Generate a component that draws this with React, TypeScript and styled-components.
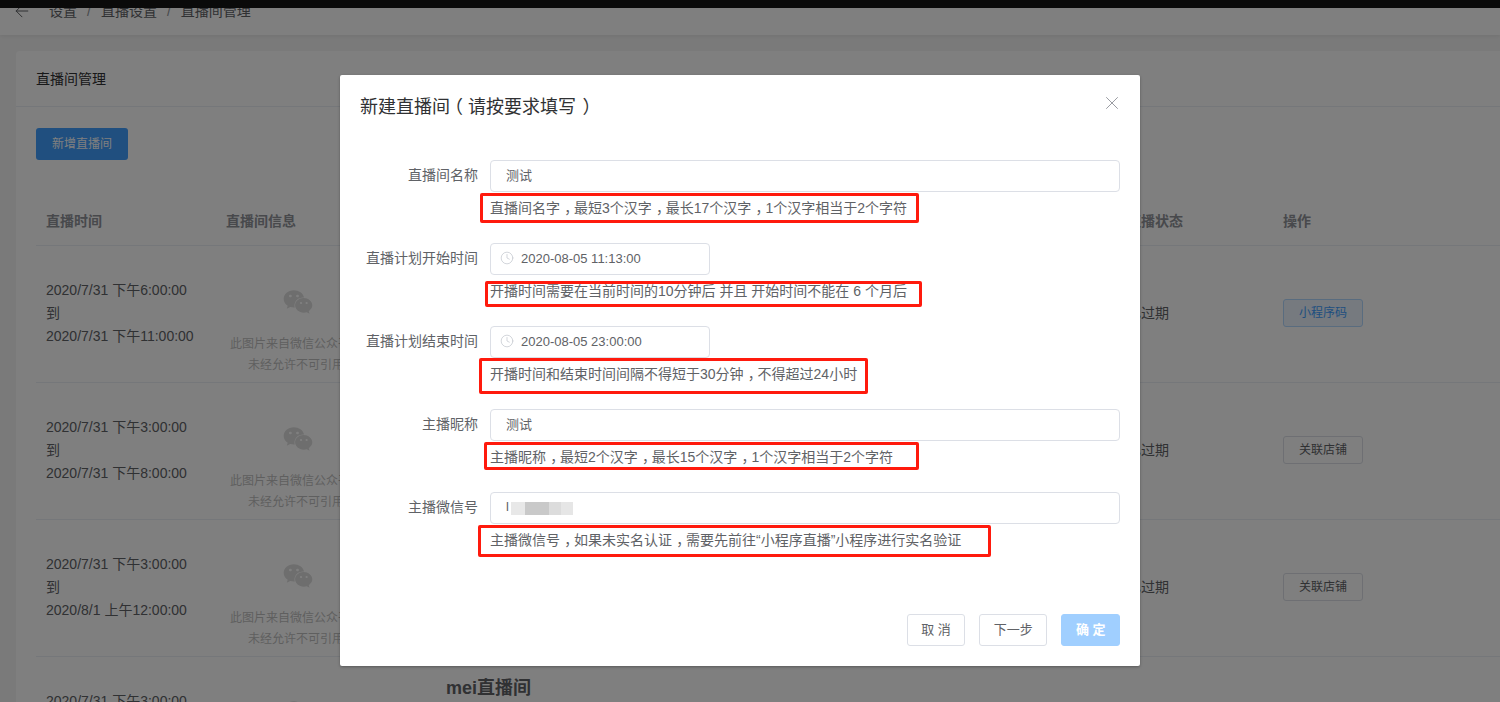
import React from "react";
import styled, { createGlobalStyle } from "styled-components";
import { ArrowLeft, Clock, X } from "lucide-react";
import { FaWeixin } from "react-icons/fa";

const GlobalStyle = createGlobalStyle`
  html, body {
    margin: 0;
    height: 100%;
    overflow: hidden;
    background: #f5f5f5;
    font-family: "Liberation Sans", "Noto Sans CJK SC", sans-serif;
    font-size: 14px;
    color: #606266;
  }
  * { box-sizing: border-box; }
`;

const Page = styled.div`
  position: relative;
  width: 1500px;
  height: 702px;
  overflow: hidden;
  background: #f5f5f5;
`;
const TopBar = styled.div`
  position: relative;
  z-index: 3;
  height: 8px;
  background: #0a0a0a;
`;
const PageHeader = styled.div`
  display: flex;
  align-items: flex-end;
  height: 27px;
  padding: 0 0 17px 12px;
  background: #ffffff;
  box-shadow: 0 1px 4px rgba(0, 0, 0, 0.08);
  color: #606266;
  line-height: 14px;
`;
const BackIcon = styled.span`
  display: flex;
  width: 37px;
  margin-bottom: -3px;
  color: #606266;
`;
const Crumb = styled.span`
  white-space: nowrap;
`;
const CrumbSep = styled.span`
  margin: 0 10px;
  color: #909399;
`;
const Card = styled.section`
  margin: 16px 0 0 16px;
  background: #ffffff;
  border-radius: 4px 0 0 0;
`;
const CardHead = styled.div`
  height: 56px;
  padding-left: 20px;
  border-bottom: 1px solid #ebeef5;
  line-height: 57px;
  color: #303133;
`;
const CardBody = styled.div`
  padding: 21px 0 0 20px;
`;
const AddButton = styled.div`
  width: 92px;
  height: 32px;
  border-radius: 3px;
  background: #409eff;
  color: #ffffff;
  font-size: 12px;
  line-height: 32px;
  text-align: center;
`;
const TableGrid = styled.div`
  display: grid;
  grid-template-columns: 180px 220px 681px 156px 1fr;
  border-bottom: 1px solid #ebeef5;
`;
const HeadRow = styled(TableGrid)`
  margin-top: 32px;
  height: 54px;
  padding-top: 2px;
  align-items: center;
  font-weight: 700;
  color: #909399;
`;
const DataRow = styled(TableGrid)`
  height: 137px;
  color: #606266;
`;
const HeadCell = styled.div`
  padding-left: 10px;
`;
const TimeCell = styled.div`
  padding: 33px 0 0 10px;
  line-height: 23px;
  white-space: nowrap;
`;
const InfoCell = styled.div`
  display: flex;
  flex-direction: column;
  align-items: center;
  width: 132px;
  margin-left: 14px;
  padding-top: 41px;
  color: #dcdcdc;
`;
const WechatMark = styled.span`
  display: flex;
  margin-left: 3px;
`;
const Placeholder = styled.div`
  margin-top: 17px;
  font-size: 12px;
  line-height: 21px;
  text-align: center;
  white-space: nowrap;
  color: #bfbfbf;
`;
const NameCell = styled.div`
  padding: 19px 0 0 10px;
  font-size: 18px;
  font-weight: 700;
  line-height: 24px;
  color: #606266;
`;
const StatusCell = styled.div`
  padding-left: 10px;
  line-height: 135px;
`;
const ActionCell = styled.div`
  display: flex;
  align-items: center;
  padding: 0 0 2px 10px;
`;
const ActionButton = styled.div<{ $primary?: boolean }>`
  width: 80px;
  height: 28px;
  border: 1px solid ${(p) => (p.$primary ? "#b3d8ff" : "#dcdfe6")};
  border-radius: 3px;
  background: ${(p) => (p.$primary ? "#ecf5ff" : "#ffffff")};
  color: ${(p) => (p.$primary ? "#409eff" : "#606266")};
  font-size: 12px;
  line-height: 26px;
  text-align: center;
`;

const Overlay = styled.div`
  position: absolute;
  inset: 0;
  z-index: 2;
  display: flex;
  justify-content: center;
  padding: 75px 20px 0 0;
  background: rgba(0, 0, 0, 0.5);
`;
const Dialog = styled.div`
  display: flex;
  flex-direction: column;
  width: 800px;
  height: 591px;
  border-radius: 2px;
  background: #ffffff;
  box-shadow: 0 1px 3px rgba(0, 0, 0, 0.3);
`;
const DialogHead = styled.div`
  display: flex;
  justify-content: space-between;
  height: 64px;
  padding: 20px 20px 0;
`;
const DialogTitle = styled.div`
  font-size: 18px;
  line-height: 24px;
  color: #303133;
  white-space: nowrap;
`;
const CloseIcon = styled.span`
  display: flex;
  height: 22px;
  margin: -3px -3px 0 0;
  color: #909399;
`;
const Form = styled.div`
  display: flex;
  flex-direction: column;
  gap: 19px;
  padding: 21px 20px 0;
`;
const FormItem = styled.div`
  display: grid;
  grid-template-columns: 118px 1fr;
  column-gap: 12px;
`;
const Label = styled.label`
  line-height: 30px;
  text-align: right;
  white-space: nowrap;
`;
const Field = styled.div<{ $short?: boolean }>`
  display: flex;
  align-items: center;
  width: ${(p) => (p.$short ? "220px" : "100%")};
  height: 32px;
  padding: 0 0 ${(p) => (p.$short ? "2px 9px" : "4px 15px")};
  border: 1px solid #dcdfe6;
  border-radius: 4px;
  color: #606266;
  font-size: 13px;
`;
const FieldIcon = styled.span`
  display: flex;
  width: 21px;
  color: #c0c4cc;
`;
const Redacted = styled.span`
  display: flex;
  height: 13px;
  margin: 4px 0 0 2px;
`;
const Blur = styled.i<{ $w: number; $c: string }>`
  display: block;
  width: ${(p) => p.$w}px;
  background: ${(p) => p.$c};
`;
const Hint = styled.div`
  position: relative;
  grid-column: 2;
  height: 32px;
  line-height: 32px;
  white-space: nowrap;
`;
const Marker = styled.div<{ $l: number; $t: number; $w: number; $h: number }>`
  position: absolute;
  left: ${(p) => p.$l}px;
  top: ${(p) => p.$t}px;
  width: ${(p) => p.$w}px;
  height: ${(p) => p.$h}px;
  border: 3px solid #ff1a0d;
  border-radius: 2px;
`;
// the font in the picture centres full-width punctuation inside its cell
const Punct = styled.span<{ $pad: number }>`
  display: inline-block;
  width: 1em;
  padding-left: ${(p) => p.$pad}em;
  font-feature-settings: "halt";
`;
const DialogFoot = styled.div`
  display: flex;
  justify-content: flex-end;
  gap: 14px;
  margin-top: auto;
  padding: 0 20px 20px;
`;
const FootButton = styled.div<{ $primary?: boolean }>`
  height: 32px;
  padding: 0 13.5px;
  border: 1px solid ${(p) => (p.$primary ? "#a0cfff" : "#dcdfe6")};
  border-radius: 3px;
  background: ${(p) => (p.$primary ? "#a0cfff" : "#ffffff")};
  color: ${(p) => (p.$primary ? "#ffffff" : "#606266")};
  font-size: 13px;
  font-weight: ${(p) => (p.$primary ? 700 : 400)};
  line-height: 29px;
  white-space: pre;
`;

const punctPad: Record<string, number> = { "，": 0.3, "（": 0.22, "）": 0.36 };

const withPunct = (text: string) =>
  text.split(/([，（）])/).map((part, i) =>
    punctPad[part] ? (
      <Punct key={i} $pad={punctPad[part]}>
        {part}
      </Punct>
    ) : (
      part
    )
  );

const rows = [
  { from: "2020/7/31 下午6:00:00", to: "2020/7/31 下午11:00:00", action: "小程序码", primary: true },
  { from: "2020/7/31 下午3:00:00", to: "2020/7/31 下午8:00:00", action: "关联店铺" },
  { from: "2020/7/31 下午3:00:00", to: "2020/8/1 上午12:00:00", action: "关联店铺" },
  { from: "2020/7/31 下午3:00:00", to: "2020/8/1 上午12:00:00", name: "mei直播间" },
];

const fields = [
  { label: "直播间名称", value: "测试", hint: "直播间名字，最短3个汉字，最长17个汉字，1个汉字相当于2个字符", box: [-10, 1, 439, 30] },
  { label: "直播计划开始时间", value: "2020-08-05 11:13:00", date: true, hint: "开播时间需要在当前时间的10分钟后 并且 开始时间不能在 6 个月后", box: [-5, 6, 437, 26] },
  { label: "直播计划结束时间", value: "2020-08-05 23:00:00", date: true, hint: "开播时间和结束时间间隔不得短于30分钟，不得超过24小时", box: [-11, 0, 389, 36] },
  { label: "主播昵称", value: "测试", hint: "主播昵称，最短2个汉字，最长15个汉字，1个汉字相当于2个字符", box: [-6, 1, 435, 28] },
  { label: "主播微信号", value: "l", redacted: true, hint: "主播微信号，如果未实名认证，需要先前往“小程序直播”小程序进行实名验证", box: [-12, 1, 513, 32] },
];

export default function App() {
  return (
    <Page>
      <GlobalStyle />
      <TopBar />
      <PageHeader>
        <BackIcon>
          <ArrowLeft size={20} strokeWidth={1.2} />
        </BackIcon>
        <Crumb>设置</Crumb>
        <CrumbSep>/</CrumbSep>
        <Crumb>直播设置</Crumb>
        <CrumbSep>/</CrumbSep>
        <Crumb>直播间管理</Crumb>
      </PageHeader>
      <Card>
        <CardHead>直播间管理</CardHead>
        <CardBody>
          <AddButton>新增直播间</AddButton>
          <HeadRow>
            <HeadCell>直播时间</HeadCell>
            <HeadCell>直播间信息</HeadCell>
            <HeadCell />
            <HeadCell>直播状态</HeadCell>
            <HeadCell>操作</HeadCell>
          </HeadRow>
          {rows.map((row, i) => (
            <DataRow key={i}>
              <TimeCell>
                {row.from}
                <br />到<br />
                {row.to}
              </TimeCell>
              <InfoCell>
                <WechatMark>
                  <FaWeixin size={30} />
                </WechatMark>
                <Placeholder>
                  此图片来自微信公众平台
                  <br />
                  未经允许不可引用
                </Placeholder>
              </InfoCell>
              <NameCell>{row.name}</NameCell>
              <StatusCell>{row.action && "已过期"}</StatusCell>
              <ActionCell>
                {row.action && <ActionButton $primary={row.primary}>{row.action}</ActionButton>}
              </ActionCell>
            </DataRow>
          ))}
        </CardBody>
      </Card>

      <Overlay>
        <Dialog>
          <DialogHead>
            <DialogTitle>{withPunct("新建直播间（请按要求填写）")}</DialogTitle>
            <CloseIcon>
              <X size={22} strokeWidth={1} />
            </CloseIcon>
          </DialogHead>
          <Form>
            {fields.map((f) => (
              <FormItem key={f.label}>
                <Label>{f.label}</Label>
                <Field $short={f.date}>
                  {f.date && (
                    <FieldIcon>
                      <Clock size={14} strokeWidth={1.2} />
                    </FieldIcon>
                  )}
                  {f.value}
                  {f.redacted && (
                    <Redacted>
                      <Blur $w={14} $c="#e8e8e8" />
                      <Blur $w={24} $c="#c9c9c9" />
                      <Blur $w={12} $c="#dcdcdc" />
                      <Blur $w={12} $c="#e6e6e6" />
                    </Redacted>
                  )}
                </Field>
                <Hint>
                  {withPunct(f.hint)}
                  <Marker $l={f.box[0]} $t={f.box[1]} $w={f.box[2]} $h={f.box[3]} />
                </Hint>
              </FormItem>
            ))}
          </Form>
          <DialogFoot>
            <FootButton>取 消</FootButton>
            <FootButton>下一步</FootButton>
            <FootButton $primary>确 定</FootButton>
          </DialogFoot>
        </Dialog>
      </Overlay>
    </Page>
  );
}
